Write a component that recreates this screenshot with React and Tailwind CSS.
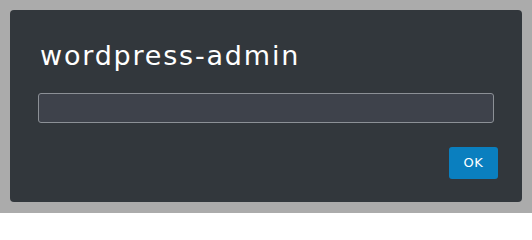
import React from "react";

const App = () => {
    return (
        <div className="w-[532px] h-[213px] overflow-hidden bg-[#ababab] p-[10px] font-['DejaVu_Sans',sans-serif]">
            <div className="w-[512px] h-[192px] bg-[#32373c] rounded-[4px] flex flex-col px-[28px] pt-[29px]">
                <h1 className="pl-[2px] text-[27px] leading-[34px] tracking-[1.8px] text-white">
                    wordpress-admin
                </h1>
                <input
                    type="text"
                    className="mt-[20px] h-[30px] w-full rounded-[3px] border border-[#8c9096] bg-[#3e424b] px-2 text-white outline-none"
                />
                <div className="flex justify-end mt-[24px] -mr-[4px]">
                    <button className="w-[49px] h-[32px] rounded-[3px] bg-[#0a7fbf] text-white text-[13px] tracking-[0.5px]">
                        OK
                    </button>
                </div>
            </div>
        </div>
    );
};

export default App;
